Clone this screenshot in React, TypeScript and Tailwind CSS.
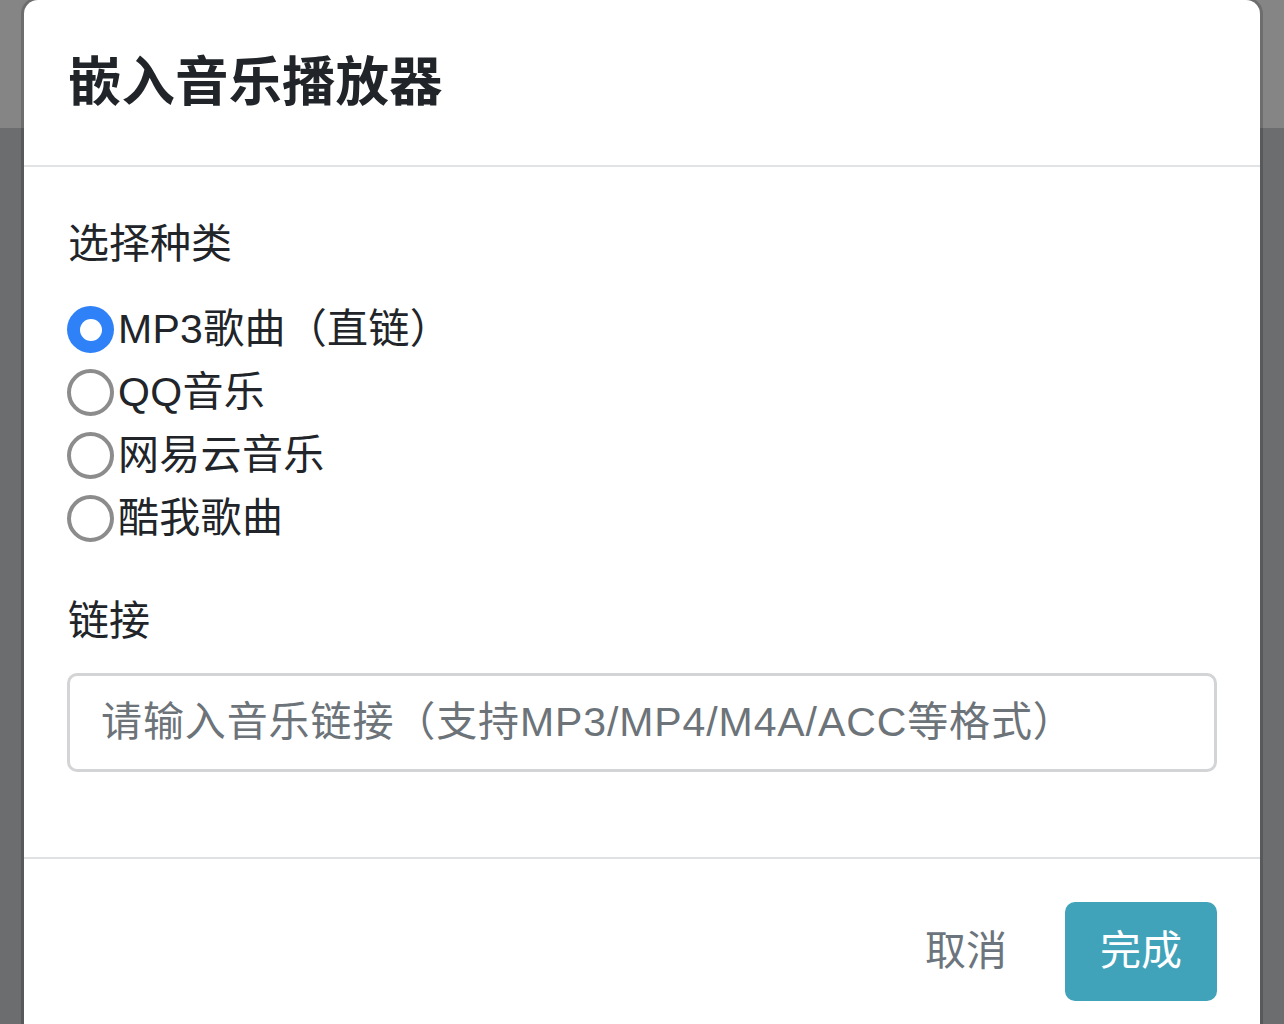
const options = ["MP3歌曲（直链）", "QQ音乐", "网易云音乐", "酷我歌曲"];

function Radio({ checked }: { checked: boolean }) {
  if (checked) {
    return (
      <span className="w-[47px] h-[47px] rounded-full bg-[#2f81f7] flex items-center justify-center shrink-0">
        <span className="w-[22px] h-[22px] rounded-full bg-white" />
      </span>
    );
  }
  return <span className="w-[47px] h-[47px] rounded-full border-[4px] border-[#8c8c8c] bg-white shrink-0" />;
}

export default function App() {
  return (
    <div
      className="relative w-[1284px] h-[1024px] overflow-hidden flex flex-col bg-[#6c6d6f]"
      style={{ fontFamily: '"Liberation Sans", "Noto Sans CJK SC", sans-serif' }}
    >
      <div className="h-[128px] bg-[#858585]" />
      <div className="flex-1" />

      <div className="absolute left-[24px] top-0 w-[1236px] h-[1100px] bg-white rounded-t-[14px] shadow-[0_0_0_3px_rgba(0,0,0,0.18)] text-[#212529]">
        <div className="h-[167px] px-[44px] flex items-center border-b-2 border-[#e2e3e5]">
          <h1 className="text-[53.5px] font-bold leading-none">嵌入音乐播放器</h1>
        </div>

        <div className="px-[43px] pt-[46px] pb-[85px] border-b-2 border-[#e0e1e3]">
          <div className="text-[41px] leading-[62px] pl-[1px]">选择种类</div>
          <div className="mt-[23px] flex flex-col">
            {options.map((o, i) => (
              <label key={o} className="h-[63px] flex items-center gap-[4px] text-[41px]">
                <Radio checked={i === 0} />
                <span className="leading-none tracking-[0.3px]">{o}</span>
              </label>
            ))}
          </div>
          <div className="mt-[40px] text-[41px] leading-[62px] pl-[1px]">链接</div>
          <div className="mt-[21px] h-[99px] border-[3px] border-[#d3d4d6] rounded-[10px] flex items-center pl-[31px]">
            <span className="text-[41px] text-[#6c7379] tracking-[0.9px]">请输入音乐链接（支持MP3/MP4/M4A/ACC等格式）</span>
          </div>
        </div>

        <div className="px-[43px] pt-[43px] flex items-center justify-end gap-[58px]">
          <span className="text-[41px] text-[#6c757d]">取消</span>
          <button className="h-[99px] px-[35px] rounded-[10px] bg-[#41a3b9] text-white text-[41px]">完成</button>
        </div>
      </div>
    </div>
  );
}
